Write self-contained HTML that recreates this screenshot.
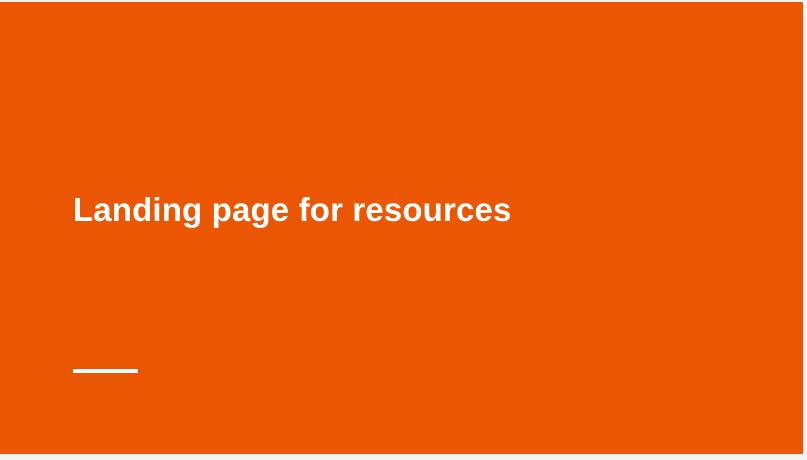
<!DOCTYPE html>
<html><head><style>
html,body{margin:0;padding:0;width:807px;height:460px;background:#f3f3f3;overflow:hidden}
.s{position:absolute;left:0;top:2px;width:803px;height:452px;background:#eb5602}
h1{position:absolute;left:73px;top:191px;margin:0;font:bold 33px "Liberation Sans",sans-serif;color:#fff;white-space:nowrap;letter-spacing:0.15px}
.l{position:absolute;left:73px;top:369px;width:65px;height:4px;background:#fff}
</style></head><body>
<div class="s"></div>
<h1>Landing page for resources</h1>
<div class="l"></div>
</body></html>
